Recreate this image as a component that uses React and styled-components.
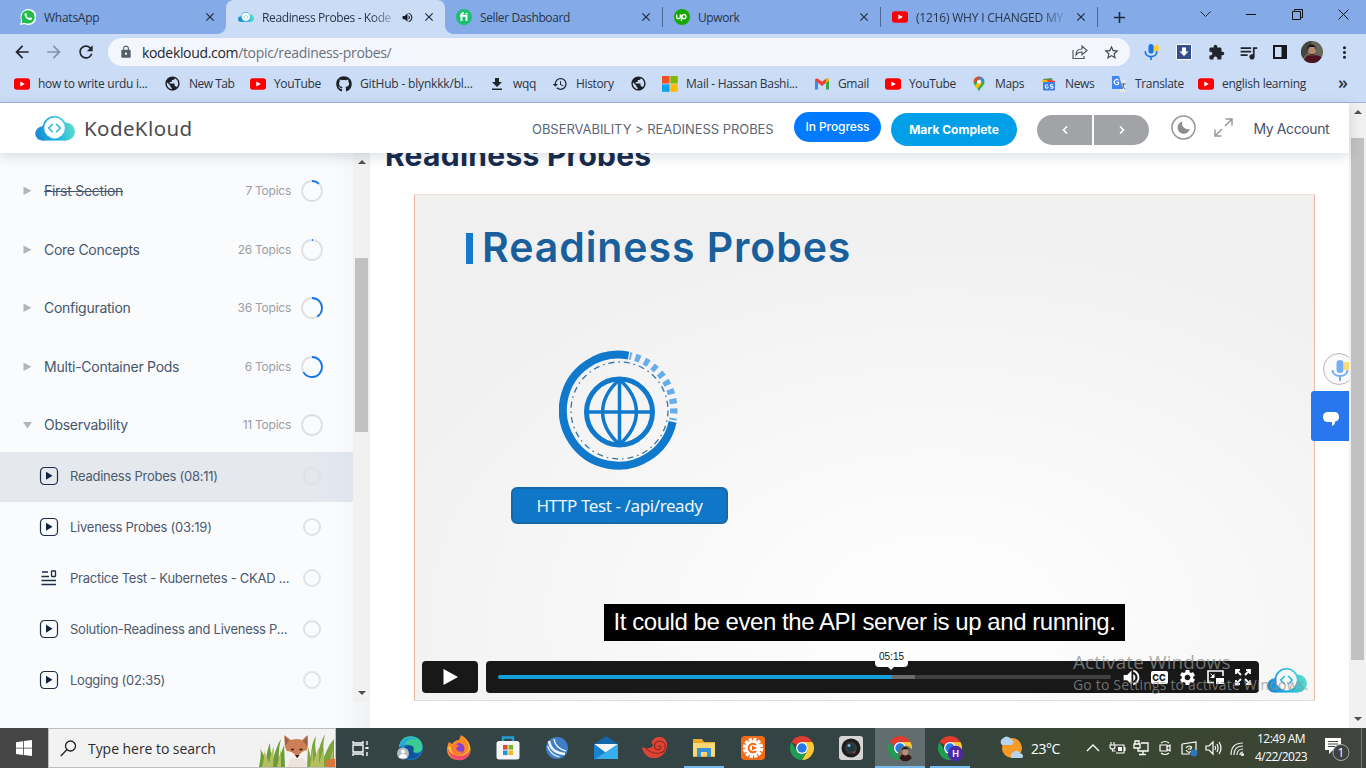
import React from "react";
import styled, { createGlobalStyle } from "styled-components";
import {
  MdArrowBack, MdArrowForward, MdRefresh, MdLock, MdStarBorder, MdExtension, MdQueueMusic,
  MdMoreVert, MdHistory, MdPublic, MdVolumeUp, MdSettings, MdClose, MdAdd,
} from "react-icons/md";
import { FaGithub } from "react-icons/fa";

const Global = createGlobalStyle`
  * { box-sizing: border-box; }
  body { margin: 0; overflow: hidden; background: #fff; }
  svg { display: block; flex: none; }
`;

const chromeFont = `"Open Sans", "Noto Sans", sans-serif`;
const pageFont = `Inter, "Liberation Sans", sans-serif`;

const Screen = styled.div`
  width: 1366px;
  height: 768px;
  display: flex;
  flex-direction: column;
  overflow: hidden;
  position: relative;
  font-family: ${chromeFont};
`;

/* ---------- browser chrome ---------- */
const TabStrip = styled.div`
  height: 34px;
  flex: none;
  display: flex;
  background: #84abe8;
`;
const Tab = styled.div`
  width: ${(p) => p.$w}px;
  height: 34px;
  display: flex;
  align-items: center;
  padding: 0 9px 0 ${(p) => p.$pl ?? 12}px;
  color: #273449;
  font-size: 12px;
  border-radius: 8px 8px 0 0;
  background: ${(p) => (p.$active ? "#cbdcf6" : "transparent")};
  position: relative;
  &::before, &::after {
    content: "";
    display: ${(p) => (p.$active ? "block" : "none")};
    position: absolute;
    bottom: 0;
    width: 8px;
    height: 8px;
  }
  &::before { left: -8px; background: radial-gradient(circle at 0 0, transparent 7.5px, #cbdcf6 8px); }
  &::after { right: -8px; background: radial-gradient(circle at 100% 0, transparent 7.5px, #cbdcf6 8px); }
`;
const TabTitle = styled.span`
  flex: 1;
  margin-left: 8px;
  white-space: nowrap;
  letter-spacing: ${(p) => p.$ls ?? -0.38}px;
  ${(p) => p.$fade && "mask-image: linear-gradient(90deg, #000 82%, rgba(0,0,0,.15) 100%);"}
`;
const TabDivider = styled.i`
  width: 1px;
  height: 20px;
  margin-top: 7px;
  background: #4a6796;
`;
const NewTab = styled.div`
  width: 42px;
  display: flex;
  align-items: center;
  justify-content: center;
`;
const WindowButtons = styled.div`
  margin-left: auto;
  display: flex;
  width: 184px;
  height: 29px;
`;
const WindowButton = styled.div`
  width: 46px;
  display: flex;
  align-items: center;
  justify-content: center;
`;
const Toolbar = styled.div`
  height: 36px;
  flex: none;
  background: #cbdcf6;
  display: flex;
  align-items: center;
  color: #20242b;
`;
const ToolButton = styled.div`
  width: ${(p) => p.$w ?? 32}px;
  display: flex;
  justify-content: center;
  align-items: center;
  color: ${(p) => p.$c ?? "#20242b"};
`;
const AddressBar = styled.div`
  width: 1022px;
  height: 28px;
  border-radius: 14px;
  background: #f3f7fd;
  display: flex;
  align-items: center;
  padding: 0 10px 0 11px;
  margin: 0 5px 0 6px;
  font-size: 14px;
  color: #6a717b;
`;
const Url = styled.span`
  flex: 1;
  margin-left: 9px;
  letter-spacing: -0.33px;
  b { font-weight: 400; color: #22262c; }
`;
const ShareBox = styled.div`margin-right: 15px;`;
const Bookmarks = styled.div`
  height: 33px;
  flex: none;
  background: #cbdcf6;
  border-bottom: 1px solid #9fb4d8;
  padding: 0 0 5px 14px;
  display: flex;
  align-items: center;
  font-size: 12px;
  color: #2b3442;
`;
const Bookmark = styled.div`
  width: ${(p) => p.$w}px;
  display: flex;
  align-items: center;
  white-space: nowrap;
  gap: 8px;
  letter-spacing: ${(p) => p.$ls ?? -0.35}px;
`;
const More = styled.span`
  margin-left: auto;
  margin-right: 18px;
  margin-top: -4px;
  font-size: 18px;
  font-weight: 600;
  line-height: 18px;
`;

/* ---------- page ---------- */
const Page = styled.div`
  height: 625px;
  flex: none;
  display: flex;
  font-family: ${pageFont};
`;
const Site = styled.div`
  width: 1349px;
  display: flex;
  flex-direction: column;
  position: relative;
`;
const SiteHeader = styled.header`
  height: 50px;
  flex: none;
  background: #fff;
  display: flex;
  align-items: center;
  padding-left: 35px;
  position: relative;
  z-index: 2;
  box-shadow: 0 3px 12px rgba(30, 45, 80, 0.17);
`;
const Brand = styled.span`
  width: 448px;
  margin: -1px 0 0 9px;
  font: 400 20.5px "Noto Sans", sans-serif;
  letter-spacing: 0.4px;
  color: #4b4b4d;
`;
const Crumbs = styled.span`
  width: 262px;
  font-size: 13px;
  padding-top: 2px;
  color: #5c6675;
  white-space: nowrap;
  letter-spacing: -0.05px;
`;
const Pill = styled.span`
  width: ${(p) => p.$w}px;
  height: ${(p) => p.$h}px;
  margin: ${(p) => p.$m};
  border-radius: 20px;
  background: ${(p) => p.$bg};
  color: #fff;
  font-size: 12px;
  font-weight: ${(p) => p.$fw};
  letter-spacing: ${(p) => p.$ls}px;
  display: flex;
  align-items: center;
  justify-content: center;
  white-space: nowrap;
  padding-bottom: 1px;
`;
const NavPair = styled.div`
  width: 112px;
  height: 30px;
  margin: 4px 22px 0 20px;
  display: flex;
  gap: 2px;
  border-radius: 15px;
  overflow: hidden;
`;
const NavHalf = styled.div`
  flex: 1;
  background: #a1a3a7;
  display: flex;
  align-items: center;
  justify-content: center;
`;
const HeaderIcon = styled.div`margin: ${(p) => p.$m};`;
const Account = styled.span`
  font-size: 14px;
  color: #43536b;
  white-space: nowrap;
  letter-spacing: -0.4px;
`;
const Body = styled.div`
  height: 575px;
  display: flex;
  overflow: hidden;
`;
const Sidebar = styled.aside`
  width: 370px;
  display: flex;
  background: linear-gradient(90deg, #fafbfd 330px, #f1f3f8 100%);
`;
const Outline = styled.div`
  width: 353px;
  padding-top: 6.5px;
`;
const SectionRow = styled.div`
  height: 58.5px;
  padding: 4.5px 30px 0 23px;
  display: flex;
  align-items: center;
  color: #46566d;
  font-size: 14px;
`;
const SectionName = styled.span`
  flex: 1;
  margin: -1px 0 0 12px;
  letter-spacing: -0.27px;
  text-decoration: ${(p) => (p.$done ? "line-through" : "none")};
`;
const TopicCount = styled.span`
  font-size: 12px;
  color: #9a9da3;
  margin: -1px 10px 0 0;
  letter-spacing: -0.25px;
`;
const LessonRow = styled.div`
  height: 50px;
  margin-bottom: 1px;
  padding: 0 32.5px 2px 39px;
  display: flex;
  align-items: center;
  background: ${(p) => (p.$active ? "linear-gradient(90deg,#e5e9ee 310px,#e0e4ee)" : "transparent")};
  color: #4b5a70;
  font-size: 13px;
`;
const LessonName = styled.span`
  flex: 1;
  margin-left: 11px;
  white-space: nowrap;
  letter-spacing: -0.25px;
`;
const Check = styled.i`
  width: 18px;
  height: 18px;
  margin-top: -1px;
  border-radius: 50%;
  border: 2px solid #dfe1e4;
`;
const Track = styled.div`
  width: 17px;
  height: ${(p) => p.$h}px;
  flex: none;
  background: #f1f1f1;
  display: flex;
  flex-direction: column;
  align-items: center;
  padding: ${(p) => p.$pt}px 0 ${(p) => p.$pb}px;
`;
const Thumb = styled.div`
  width: 13px;
  margin-top: ${(p) => p.$mt}px;
  margin-bottom: auto;
  height: ${(p) => p.$h}px;
  background: #c1c1c1;
`;
const Arrow = styled.i`
  border: 4px solid transparent;
  ${(p) => (p.$down ? "border-top-color:#505050;border-bottom:0;" : "border-bottom-color:#505050;border-top:0;")}
`;
const Main = styled.main`
  flex: 1;
  background: #fff;
  padding-left: 15px;
`;
const Heading = styled.h1`
  margin: -18px 0 0;
  height: 59px;
  font-size: 30px;
  line-height: 40px;
  font-weight: 700;
  color: #172b4d;
  letter-spacing: 0.27px;
`;
const Video = styled.section`
  width: 901px;
  height: 507px;
  margin-left: 29px;
  position: relative;
  border: 1px solid #e9b9a4;
  border-top-color: #eed9d3;
  border-bottom-color: #ddd;
  background: radial-gradient(ellipse 620px 400px at 58% 84%, #fcfcfc 20%, #f6f6f6 62%, #f0f0f1 100%);
  padding: 33px 0 0 51px;
`;
const SlideTitle = styled.div`
  height: 38px;
  display: flex;
  align-items: center;
  gap: 9px;
  font-size: 41px;
  font-weight: 600;
  line-height: 36px;
  color: #195f9c;
  letter-spacing: 0.92px;
  white-space: nowrap;
  &::before { content: ""; width: 7px; height: 31px; margin-top: 3px; background: #1279cb; }
`;
const Probe = styled.div`
  width: 217px;
  margin: 84px 0 0 45px;
  display: flex;
  flex-direction: column;
  align-items: center;
`;
const ProbeLabel = styled.div`
  width: 217px;
  height: 37px;
  margin-top: 15px;
  border: 2px solid #1767ab;
  border-radius: 6px;
  background: #0e77c8;
  color: #eef6fd;
  font: 400 17px/34px "Noto Sans", sans-serif;
  letter-spacing: -0.4px;
  text-align: center;
`;
const Caption = styled.div`
  position: absolute;
  left: 189px;
  top: 409px;
  width: 521px;
  height: 37px;
  background: #000;
  color: #fff;
  text-align: center;
  font: 24px/36px "Liberation Sans", Arial, sans-serif;
  letter-spacing: -0.45px;
  white-space: nowrap;
`;
const Controls = styled.div`
  position: absolute;
  left: 7px;
  bottom: 7px;
  display: flex;
  align-items: center;
  gap: 8px;
`;
const PlayButton = styled.div`
  width: 56px;
  height: 32px;
  border-radius: 4px;
  background: #181818;
  display: flex;
  align-items: center;
  justify-content: center;
`;
const Bar = styled.div`
  width: 773px;
  height: 32px;
  border-radius: 4px;
  background: #181818;
  display: flex;
  align-items: center;
  padding-left: 12px;
`;
const Progress = styled.div`
  width: 613px;
  height: 4px;
  margin-right: 10px;
  border-radius: 2px;
  position: relative;
  background: linear-gradient(90deg, #15a0dc 394px, #6b6b6b 394px, #6b6b6b 417px, #404040 417px);
`;
const TimeTip = styled.div`
  position: absolute;
  left: 377px;
  top: -28px;
  width: 33px;
  height: 20px;
  border-radius: 4px;
  background: #fff;
  color: #111;
  text-align: center;
  font: 10px/19px "Liberation Sans", Arial, sans-serif;
  &::after {
    content: "";
    position: absolute;
    left: 12px;
    top: 19px;
    border: 4px solid transparent;
    border-top-color: #fff;
  }
`;
const BarIcon = styled.div`
  width: 28px;
  margin-left: ${(p) => p.$ml ?? 0}px;
  display: flex;
  justify-content: center;
`;
const CC = styled.b`
  width: 17px;
  height: 13px;
  border-radius: 2px;
  background: #fff;
  color: #181818;
  font: 800 9px/13px Inter, sans-serif;
  text-align: center;
`;
const PlayerLogo = styled.div`margin-top: 6px;`;
const FloatingMic = styled.div`
  position: absolute;
  right: 0;
  top: 250px;
  width: 26px;
  height: 32px;
  overflow: hidden;
`;
const ChatButton = styled.div`
  position: absolute;
  right: 0;
  top: 288px;
  width: 38px;
  height: 50px;
  border-radius: 3px 0 0 3px;
  background: #2977ef;
  display: flex;
  align-items: center;
  justify-content: center;
  padding: 5px 0 0 2px;
`;
const Watermark = styled.div`
  position: absolute;
  left: 1073px;
  top: 650px;
  color: rgba(145, 145, 145, 0.76);
  white-space: nowrap;
`;
const WatermarkTitle = styled.div`
  font-size: 19px;
  line-height: 24px;
  letter-spacing: 0.1px;
`;
const WatermarkText = styled.div`
  font-size: 14px;
  line-height: 22px;
  letter-spacing: 0.17px;
`;

/* ---------- taskbar ---------- */
const Taskbar = styled.footer`
  height: 40px;
  flex: none;
  display: flex;
  background: linear-gradient(90deg, #454545 0, #454545 48px, #344344 336px, #344344 900px, #394733 1080px, #394531 1230px, #414340 1366px);
  color: #fff;
`;
const Start = styled.div`
  width: 48px;
  display: flex;
  align-items: center;
  justify-content: center;
`;
const Search = styled.div`
  width: 288px;
  border: 1px solid #bdbdbd;
  background: #f2f2f2;
  display: flex;
  align-items: center;
  padding-left: 11px;
  color: #2d2d2d;
  font-size: 14px;
  overflow: hidden;
`;
const SearchText = styled.span`
  flex: 1;
  margin-left: 11px;
  letter-spacing: -0.05px;
  white-space: nowrap;
`;
const Task = styled.div`
  width: ${(p) => p.$w ?? 49}px;
  display: flex;
  align-items: center;
  justify-content: center;
  background: ${(p) => (p.$active ? "#616e6f" : "transparent")};
  ${(p) => p.$open && "background-image: linear-gradient(#76b9ed, #76b9ed); background-size: 40px 2px; background-position: center bottom; background-repeat: no-repeat;"}
  ${(p) => p.$active && "background-size: 100% 2px;"}
`;
const Weather = styled.div`
  width: 100px;
  padding-left: 24px;
  display: flex;
  align-items: center;
  gap: 7px;
  font-size: 14px;
  letter-spacing: -0.5px;
`;
const Tray = styled.div`
  margin-left: 7px;
  display: flex;
  align-items: center;
`;
const TrayIcon = styled.div`
  width: 24px;
  display: flex;
  justify-content: center;
`;
const Clock = styled.div`
  width: 60px;
  padding-top: 2px;
  margin-left: 2px;
  font-size: 12px;
  line-height: 18px;
  text-align: center;
  white-space: nowrap;
  letter-spacing: -0.52px;
`;
const Notice = styled.div`
  margin-left: auto;
  width: 41px;
  border-right: 1px solid #777;
  margin-right: 4px;
  display: flex;
  align-items: center;
  padding-left: 3px;
`;

/* ---------- drawings ---------- */
const YouTube = () => (
  <svg width="16" height="16" viewBox="0 0 16 16"><rect y="2.200" width="16" height="11.600" rx="2.800" fill="#f00" /><path d="M6.300 5.400v5.200L10.800 8z" fill="#fff" /></svg>
);
const CloudLogo = ({ size = 40, id, ring = "#fff" }) => (
  <svg width={size} height={size * 0.625} viewBox="0 0 40 25">
    <defs><linearGradient id={id} gradientUnits="userSpaceOnUse" x1="2" x2="38" y1="20" y2="8"><stop stopColor="#178bd6" /><stop offset=".5" stopColor="#25b5df" /><stop offset="1" stopColor="#5cdccb" /></linearGradient></defs>
    <g fill={`url(#${id})`}><circle cx="7.200" cy="17.600" r="7" /><circle cx="31" cy="15.500" r="9" /><path d="M7 10h24v14.600H7z" /><circle cx="19.500" cy="12" r="11.900" /></g>
    <circle cx="19.500" cy="12" r="10.400" fill={ring} />
    <path d="M17.800 8l-4.100 4.100 4.100 4.100M21.200 8l4.100 4.100-4.100 4.100" fill="none" stroke="#28b9dc" strokeWidth="1.500" />
  </svg>
);
const MicMark = ({ w = 16 }) => (
  <svg width={w} height={w} viewBox="0 0 16 16">
    <rect x="9.500" y="1.200" width="6.200" height="6" rx="1" fill="#fbce2b" />
    <rect x="5.500" y="0" width="5" height="9.500" rx="2.500" fill="#1a73e8" />
    <path d="M2.200 7.200c0 3.200 2.500 5.400 5.800 5.400s5.800-2.200 5.800-5.400M8 12.500V16" fill="none" stroke="#1a73e8" strokeWidth="1.700" />
  </svg>
);
const Chrome = ({ badge }) => (
  <svg width="28" height="28" viewBox="0 0 28 28">
    <path d="M14 2A12 12 0 0 1 24.400 8H14a6 6 0 0 0-5.200 3L3.600 8A12 12 0 0 1 14 2z" fill="#e33b2e" />
    <path d="M24.400 8A12 12 0 0 1 14 26l5.200-9A6 6 0 0 0 19.200 11L14 8z" fill="#fcc934" />
    <path d="M3.600 8l5.200 9a6 6 0 0 0 5.200 3h3.500L14 26A12 12 0 0 1 3.600 8z" fill="#1e9c50" />
    <circle cx="14" cy="14" r="6" fill="#fff" /><circle cx="14" cy="14" r="4.700" fill="#2779ea" />
    {badge === "H" && (<><circle cx="19.500" cy="19.500" r="7.700" fill="#4b2ba5" /><text x="19.500" y="22.700" textAnchor="middle" fontSize="9" fontWeight="600" fill="#fff" fontFamily="Inter, sans-serif">H</text></>)}
    {badge === "photo" && (<><circle cx="19.500" cy="19.500" r="7.700" fill="#69705f" /><path d="M13.500 24.500c1-3.600 3-4.500 6-4.500s5.500 1 6.300 4a7.700 7.700 0 0 1-12.300.5z" fill="#34181d" /><ellipse cx="19.300" cy="17.500" rx="3" ry="3.900" fill="#bb8e78" /><path d="M15.900 17c-.5-5 7-5.500 6.800 0l-1-1.800h-4.600z" fill="#17181a" /></>)}
  </svg>
);
const Avatar = () => (
  <svg width="22" height="22" viewBox="0 0 22 22"><circle cx="11" cy="11" r="11" fill="#69665a" /><path d="M11 0a11 11 0 0 0-11 11c0 3 1 5 2 6l5-6z" fill="#45473f" /><path d="M3.200 19C5 14.500 7 14 11.500 14c5 0 8 1 9 2.500A11 11 0 0 1 3.200 19z" fill="#4b1420" /><ellipse cx="11" cy="9.500" rx="3.800" ry="5.200" fill="#b98872" /><path d="M6.500 9C5.500 1.500 15.700 1.500 15 9l-1.500-3H8.300z" fill="#14161a" /><path d="M8 12c1 3.500 5 3.500 6 0l-1.500 1h-3z" fill="#362923" /></svg>
);
const PlayBox = () => (
  <svg width="20" height="20" viewBox="0 0 20 20"><rect x="1.500" y="1.500" width="17" height="17" rx="4" fill="none" stroke="#1d2d48" strokeWidth="1.200" /><path d="M7 5.700v8l6.500-4z" fill="#10233f" /></svg>
);
const QuizIcon = () => (
  <svg width="20" height="20" viewBox="0 0 20 20" fill="none" stroke="#1d2d48" strokeWidth="1.300"><path d="M3 4h6M2.500 8.500h7.500M2.500 12.500h14.500M2.500 16.500h14.500" /><rect x="12.500" y="3" width="4" height="5.500" rx=".5" /></svg>
);
const Ring = ({ value }) => (
  <svg width="22" height="22" viewBox="0 0 22 22"><g fill="none" strokeWidth="1.800"><circle cx="11" cy="11" r="10" stroke="#dedfe2" />{value > 0 && <circle cx="11" cy="11" r="10" stroke="#1478ea" strokeDasharray={`${value * 62.83} 63`} transform="rotate(-90 11 11)" />}</g></svg>
);
const Caret = ({ open }) => (
  <svg width="9" height="10" viewBox="0 0 9 10"><path d={open ? "M0 2h9L4.500 8.500z" : "M.5 .5v8.500L8.500 4.700z"} fill="#b4b5b8" /></svg>
);
const ProbeGlobe = () => (
  <svg width="122" height="122" viewBox="0 0 122 122" fill="none">
    <path d="M69.500 5.600A55.500 55.500 0 1 0 113.600 71.800" stroke="#1179cb" strokeWidth="8" />
    <path d="M70.600 5.800A55.500 55.500 0 0 1 113.800 70.600" stroke="#68adeb" strokeWidth="7.500" strokeDasharray="2 4 5 4.700 5 4.700 5 4.700 5 4.700 5 4.700 5 4.700 5 4.700 5 4.700 2 3" />
    <circle cx="60.500" cy="60.500" r="48.500" stroke="#3477a7" strokeWidth="1.300" strokeDasharray="6 4 1.500 4" />
    <g stroke="#1179cb" transform="translate(0 1.500)"><circle cx="60.500" cy="60.500" r="33" strokeWidth="5" /><path d="M28 60.500h65M60.500 28v65" strokeWidth="3.500" /><path d="M60.500 28C38 48 38 73 60.500 93M60.500 28C83 48 83 73 60.500 93" strokeWidth="3.500" /></g>
  </svg>
);
const Fox = () => (
  <svg width="76" height="38" viewBox="0 0 76 38">
    <path d="M0 38Q3 23 1 19Q5 26 7 32Q8 20 11 14Q11 23 14 30Q18 16 22 10Q19 21 20 30L25 16L26 38Z" fill="#6c9b3a" />
    <path d="M48 38L49 18L52 29Q52 14 57 7Q55 18 58 28Q61 14 66 5Q63 18 65 28Q70 15 75 10V38Z" fill="#7ba53c" />
    <path d="M3 38Q6 26 5 21L10 34Q12 23 15 17L14 38M18 38L22 20V38M51 38L54 20V34L60 18V35L65 17V38M69 38L74 20V38" fill="#b4bf61" />
    <path d="M29 38c0-6 4-11 9-11s10 4 9 11z" fill="#eee4dc" />
    <path d="M25 6l7 5q6-2 11 0l6-5 0 11q-1 9-11 14-9-4-12-13z" fill="#cd8058" />
    <path d="M26 7l4 5-4 5zM48 7l-4 5 4 5z" fill="#9c6149" />
    <path d="M27 22q6 0 9 4l2 3 2-3q3-4 8-5-2 7-10 10-8-3-11-9z" fill="#f8f2ed" />
    <ellipse cx="33.500" cy="20.500" rx="1.700" ry=".9" fill="#322a27" /><ellipse cx="42" cy="20.500" rx="1.700" ry=".9" fill="#322a27" /><path d="M36 26h4.600l-2.300 3z" fill="#251f21" />
    <path d="M67 38v-6q4-3 9-2v8z" fill="#d9763a" />
  </svg>
);
const svgTask = {
  view: <svg width="17" height="17" viewBox="0 0 17 17" fill="none" stroke="#fff" strokeWidth="1.300"><path d="M1 1v2h10V1M1 16v-2h10v2M1 5h10v7H1zM15 1v4M15 12v4" /><path d="M13.500 7h3v2h-3z" fill="#fff" stroke="none" /></svg>,
  edge: <svg width="26" height="26" viewBox="0 0 26 26"><circle cx="14" cy="13" r="12" fill="#1474ba" /><path d="M2 12C3 3 11-1 19 2.500c7 3 8 11 4.500 14-3 2.500-8 1-8-1.500 1-5-8-7-13.500-3z" fill="#3dcb94" /><path d="M2 12C4 2 15 0 20 5c-7-3-12 1-13 7-2-1-4-1-5 0z" fill="#25a9dc" /><path d="M8 12c6-4 11 0 8 5 2 3 6 2 8 0-3 6-10 9-15 5-3-3-3-7-1-10z" fill="#0d559b" /><circle cx="6" cy="18.500" r="6" fill="#b5bbbe" /><circle cx="6" cy="16.500" r="2" fill="#fff" /><path d="M2 23q0-4 4-4t4 4z" fill="#fff" /></svg>,
  fox: <svg width="26" height="26" viewBox="0 0 26 26"><path d="M3 7l3 2q3-4 7-4l2-5q7 4 9 11c3 10-6 15-12 14C3 25-2 17 3 7z" fill="#fd8a25" /><path d="M16 1q6 5 7 12-3 8-10 8c-6 0-9-5-7-10l-4 1q-1 12 11 12c9 0 13-8 10-15-2-4-4-6-7-8z" fill="#fbc72d" /><path d="M2 13q3 9 13 8 7-1 9-7c0 8-6 12-12 11S2 20 2 13z" fill="#f6476f" /><circle cx="13" cy="13.500" r="5.500" fill="#8740ce" /><path d="M5 10q5-2 9 1-3 0-4 3 3 4 7 2-3 5-8 3-5-3-4-9z" fill="#fb7a35" /></svg>,
  store: <svg width="26" height="26" viewBox="0 0 26 26"><path d="M8 7V2.500h10V7" fill="none" stroke="#24a0d8" strokeWidth="2.500" /><rect x="1.500" y="6" width="23" height="18.500" rx="2.500" fill="#f5f6f7" /><path d="M8 10h4.600v4.600H8z" fill="#e04b32" /><path d="M13.500 10h4.600v4.600h-4.600z" fill="#76b62b" /><path d="M8 15.500h4.600v4.600H8z" fill="#199bd7" /><path d="M13.500 15.500h4.600v4.600h-4.600z" fill="#f7b523" /></svg>,
  globe: <svg width="24" height="24" viewBox="0 0 24 24"><circle cx="12" cy="12" r="11" fill="#3f7fc9" /><g fill="none" stroke="#edf5ff"><path d="M4 5q2 12 16 13" strokeWidth="2.500" /><path d="M9 3q1 9 12 12" strokeWidth="1.500" /><path d="M2.500 10q3 9 12 11" strokeWidth="1.200" /></g></svg>,
  mail: <svg width="26" height="26" viewBox="0 0 26 26"><path d="M1 9L13 1l12 8v15H1z" fill="#1266a7" /><path d="M1 9h24L13 18z" fill="#f2f4f5" /><path d="M1 9l12 9-12 7z" fill="#1783ce" /><path d="M25 9v15H2z" fill="#37aeea" /></svg>,
  shell: <svg width="26" height="26" viewBox="0 0 26 26"><path d="M0 12q7 3 11-1c0-3-2-1-1-4C12 0 25 0 25 10c0 9-8 14-14 13-6 0-10-5-11-11z" fill="#dc4436" /><path d="M16 15c-5-1-5-9 2-9 7 1 7 10 0 12-7 1-11-1-14-5M16 12q2-3 3 0-1 4-4 2" fill="none" stroke="#96251f" strokeWidth="1.200" /></svg>,
  folder: <svg width="24" height="24" viewBox="0 0 24 24"><path d="M1 3h9l2 3h11v15H1z" fill="#e9aa2c" /><path d="M1 7h22v13H1z" fill="#fbd873" /><path d="M5 12h14v9h-4v-5H9v5H5z" fill="#3a91d3" /></svg>,
  sun: <svg width="26" height="26" viewBox="0 0 26 26"><rect x="1" y="1" width="24" height="24" rx="4" fill="#f36b17" /><circle cx="13" cy="13" r="8.800" fill="none" stroke="#fff" strokeWidth="2.800" strokeDasharray="3.300 1.300" /><circle cx="13" cy="13" r="7.800" fill="#fff" /><path d="M16 10a4.300 4.300 0 1 0 0 6" fill="none" stroke="#f36b17" strokeWidth="2" /><path d="M12 10.500v5l5-2.500z" fill="#f36b17" /></svg>,
  camera: <svg width="26" height="26" viewBox="0 0 26 26"><rect x="1" y="1" width="24" height="24" rx="3" fill="#d6d5d3" /><circle cx="13" cy="13" r="9.500" fill="#1b1d1f" /><circle cx="13" cy="13" r="6" fill="#34393b" /><circle cx="13" cy="13" r="3.500" fill="#173942" /><circle cx="11" cy="10.500" r="1.500" fill="#77b9c6" /><path d="M15 17l3-1-2 3z" fill="#c94134" /></svg>,
};
const svgTray = [
  <svg width="14" height="10" viewBox="0 0 14 10"><path d="M1 8l6-6 6 6" fill="none" stroke="#fff" strokeWidth="1.300" /></svg>,
  <svg width="17" height="16" viewBox="0 0 17 16" fill="none" stroke="#fff" strokeWidth="1.100"><path d="M6 5h9v8H7M16 7v4M2 2v3M5 2v3M1 5h5v2q0 2-2.500 2T1 7zM3.500 9v2h3" /><path d="M9 7h4v4H9z" fill="#fff" stroke="none" /></svg>,
  <svg width="16" height="16" viewBox="0 0 16 16" fill="none" stroke="#fff" strokeWidth="1.300"><path d="M8 3h7v8H5V8M10 11v3M6 14.500h7" /><path d="M1 4h6v4H1zM2 4V1h4v3" /></svg>,
  <svg width="14" height="16" viewBox="0 0 14 16" fill="none" stroke="#fff" strokeWidth="1.200"><path d="M2 5h7v6H2zM9 7l3-2v6L9 9M3 3q4-3 8 0M3 13q4 3 8 0" /></svg>,
  <svg width="17" height="17" viewBox="0 0 17 17" fill="none" stroke="#fff" strokeWidth="1.200"><path d="M1 4l14-2v10M1 4v10h8M5 8q3-4 6 0M10 6v3H7M5 10q3 4 5 1" /><circle cx="13" cy="13" r="3.500" fill="#2d75bd" stroke="none" /></svg>,
  <svg width="17" height="16" viewBox="0 0 17 16" fill="none" stroke="#fff" strokeWidth="1.200"><path d="M1 6h3l4-4v12l-4-4H1zM10 6q1 2 0 4M12 4q2 4 0 8M14 2q4 6 0 12" /></svg>,
  <svg width="16" height="16" viewBox="0 0 16 16" fill="none" stroke="#e8e8e8" strokeWidth="1.200"><path d="M2 15Q2 3 14 3M5 15Q5 6 14 6M8 15q0-6 6-6M11 15q0-3 3-3" /><circle cx="13.500" cy="14.500" r="1" fill="#fff" /></svg>,
];
const bookmarkIcon = {
  yt: <YouTube />,
  globe: <MdPublic size={17} color="#1c2026" />,
  git: <FaGithub size={16} color="#1c2026" />,
  down: <svg width="16" height="16" viewBox="0 0 16 16"><path d="M6 2h4v4h3l-5 5-5-5h3zM3 12.500h10V14H3z" fill="#20242b" /></svg>,
  hist: <MdHistory size={16} color="#20242b" />,
  ms: <svg width="16" height="16" viewBox="0 0 16 16"><path d="M0 0h7.500v7.500H0z" fill="#f25022" /><path d="M8.300 0h7.500v7.500H8.300z" fill="#7fba00" /><path d="M0 8.300h7.500v7.500H0z" fill="#00a4ef" /><path d="M8.300 8.300h7.500v7.500H8.300z" fill="#ffb900" /></svg>,
  gmail: <svg width="16" height="16" viewBox="0 0 16 16"><path d="M1 4v9.500h3V6z" fill="#4285f4" /><path d="M15 4v9.500h-3V6z" fill="#34a853" /><path d="M1 4.500C1 2 3.500 2 4.500 3L8 5.800 11.500 3C12.500 2 15 2 15 4.500L8 10z" fill="#ea4335" /><path d="M12 3l1-.5q2 0 2 2.200L12 7z" fill="#fbbc04" /></svg>,
  maps: <svg width="16" height="16" viewBox="0 0 16 16"><path d="M2.500 6A5.500 5.500 0 0 1 13.500 6c0 4-4.500 5-5.500 10-1-5-5.500-6-5.500-10z" fill="#34a853" /><path d="M2.800 4.500A5.500 5.500 0 0 1 9.700.8L4 7.500z" fill="#ea4335" /><path d="M9.700.8q3 .9 3.700 3.700L8 9z" fill="#4285f4" /><path d="M4 9.500L9.500 3.500l1 4.500-4.200 5z" fill="#fbbc04" /><circle cx="8" cy="5.800" r="2" fill="#fff" /></svg>,
  news: <svg width="16" height="16" viewBox="0 0 16 16"><path d="M2 3l9-1 1 5H3z" fill="#34a853" /><path d="M5 3l9 2-1 4H5z" fill="#ea4335" /><path d="M1 4h5l1 3H2z" fill="#fbbc04" /><rect x="2" y="6" width="12" height="8.500" rx="1" fill="#3f7fe8" /><path d="M7 9H4.500v3H7v-1.500M12 8.800H9.500v1.600H12v1.800H9.500" stroke="#fff" fill="none" /></svg>,
  trans: <svg width="16" height="16" viewBox="0 0 16 16"><path d="M6 4h9v12H9z" fill="#e6e8ea" /><path d="M1 0h7l4 13H1z" fill="#4285f4" /><path d="M7.500 4.300a2.500 2.500 0 1 0 0 3.600V6.300H5.500" stroke="#fff" fill="none" strokeWidth="1.100" /><path d="M10.500 8H15M12.500 7v1q1 3-2 5M11.500 9.500q1 2.500 3 3.500" stroke="#647180" fill="none" /></svg>,
};
const bookmarks = [
  ["yt", "how to write urdu i...", 150, -0.28], ["globe", "New Tab", 86, -0.5], ["yt", "YouTube", 86], ["git", "GitHub - blynkkk/bl...", 153, -0.18],
  ["down", "wqq", 63], ["hist", "History", 78], ["globe", "", 32], ["ms", "Mail - Hassan Bashi...", 152, -0.28], ["gmail", "Gmail", 71],
  ["yt", "YouTube", 86], ["maps", "Maps", 70], ["news", "News", 70], ["trans", "Translate", 87], ["yt", "english learning", 120, -0.28],
];
const sections = [
  ["First Section", 7, 0.12, true], ["Core Concepts", 26, 0.015], ["Configuration", 36, 0.41], ["Multi-Container Pods", 6, 0.66], ["Observability", 11, 0],
];
const lessons = [
  ["Readiness Probes (08:11)"], ["Liveness Probes (03:19)"], ["Practice Test - Kubernetes - CKAD ...", true],
  ["Solution-Readiness and Liveness P..."], ["Logging (02:35)"],
];
const CloseX = () => <MdClose size={14} color="#202a3a" />;

function Browser() {
  return (
    <>
      <TabStrip>
        <Tab $w={226} $pl={20}>
          <svg width="16" height="16" viewBox="0 0 16 16"><path d="M0 16l1.300-4.500A8 8 0 1 1 4.500 14.900z" fill="#fff" /><circle cx="8" cy="7.900" r="6.700" fill="#1fbd48" /><path d="M1.600 14.500l1-3.500 2.400 2.500z" fill="#1fbd48" /><path d="M5 4.300q1-.9 1.600.2l.5 1.200-.7 1q1 1.800 2.800 2.600l1-1 1.700.8q.3.600-.3 1.300-1.500 1.500-4.500-.6C4.500 7.800 4 5.800 5 4.300z" fill="#fff" /></svg>
          <TabTitle $ls={-0.25}>WhatsApp</TabTitle><CloseX />
        </Tab>
        <Tab $w={219} $active>
          <CloudLogo size={16} id="tabcloud" /><TabTitle $fade>Readiness Probes - Kode</TabTitle>
          <HeaderIcon $m="0 8px 0 6px"><MdVolumeUp size={13} color="#15191f" /></HeaderIcon><CloseX />
        </Tab>
        <Tab $w={217} $pl={11}>
          <svg width="16" height="16" viewBox="0 0 16 16"><circle cx="8" cy="8" r="8" fill="#1dbf73" /><path d="M5.500 12V6q0-2 2.500-2M4 6.700h6.500V12M10.500 4v1.200" stroke="#fff" strokeWidth="1.900" fill="none" /></svg>
          <TabTitle>Seller Dashboard</TabTitle><CloseX />
        </Tab>
        <TabDivider />
        <Tab $w={217} $pl={11}>
          <svg width="16" height="16" viewBox="0 0 16 16"><circle cx="8" cy="8" r="8" fill="#14a800" /><path d="M2.700 5.500v2.200q0 2 1.800 2t1.800-2V5.500q1.500 4 3.700 4.200a2 2 0 1 0-2-2.200L7.300 12" stroke="#fff" strokeWidth="1.300" fill="none" /></svg>
          <TabTitle>Upwork</TabTitle><CloseX />
        </Tab>
        <TabDivider />
        <Tab $w={216} $pl={11}><YouTube /><TabTitle $fade $ls={-0.2}>(1216) WHY I CHANGED MY</TabTitle><HeaderIcon $m="0 0 0 8px"><CloseX /></HeaderIcon></Tab>
        <TabDivider />
        <NewTab><MdAdd size={19} color="#202a3a" /></NewTab>
        <WindowButtons>
          <WindowButton><svg width="11" height="7" viewBox="0 0 11 7"><path d="M.5 .5l5 5 5-5" fill="none" stroke="#1c2635" /></svg></WindowButton>
          <WindowButton><svg width="10" height="2"><path d="M0 .5h10" stroke="#111" /></svg></WindowButton>
          <WindowButton><svg width="11" height="11" viewBox="0 0 11 11" fill="none" stroke="#111"><path d="M.5 2.500h8v8h-8zM2.500 2.500v-2h8v8h-2" /></svg></WindowButton>
          <WindowButton><svg width="11" height="11" viewBox="0 0 11 11"><path d="M.5 .5l10 10M10.500 .5l-10 10" stroke="#111" /></svg></WindowButton>
        </WindowButtons>
      </TabStrip>
      <Toolbar>
        <ToolButton $w={43}><MdArrowBack size={20} /></ToolButton>
        <ToolButton $w={22} $c="#8291ab"><MdArrowForward size={20} /></ToolButton>
        <ToolButton $w={37}><HeaderIcon $m="0 0 0 5px"><MdRefresh size={20} /></HeaderIcon></ToolButton>
        <AddressBar>
          <MdLock size={14} color="#555d68" />
          <Url><b>kodekloud.com</b>/topic/readiness-probes/</Url>
          <ShareBox><svg width="16" height="16" viewBox="0 0 16 16" fill="none" stroke="#4f5865" strokeWidth="1.200"><path d="M1 6v8.500h11V12M4 11q0-6 6-6V2l5 4.500-5 4.200V8Q6 8 4 11z" /></svg></ShareBox>
          <MdStarBorder size={17} color="#40474f" />
        </AddressBar>
        <ToolButton><MicMark /></ToolButton>
        <ToolButton $w={34}><svg width="16" height="16" viewBox="0 0 16 16"><path d="M.5 .5h15v15H.5z" fill="#344f8b" stroke="#fff" /><path d="M6 3.500h4v4h2.500l-4.500 4.500-4.500-4.500H6z" fill="#fff" /></svg></ToolButton>
        <ToolButton $w={31}><MdExtension size={17} /></ToolButton>
        <ToolButton><MdQueueMusic size={21} /></ToolButton>
        <ToolButton><svg width="14" height="14" viewBox="0 0 14 14"><path d="M1 1h12v12H1z" fill="none" stroke="#15191f" strokeWidth="2" /><path d="M8.500 1H13v12H8.500z" fill="#15191f" /></svg></ToolButton>
        <ToolButton><Avatar /></ToolButton>
        <ToolButton $w={33}><MdMoreVert size={19} /></ToolButton>
      </Toolbar>
      <Bookmarks>
        {bookmarks.map(([icon, text, w, ls], i) => <Bookmark key={i} $w={w} $ls={ls}>{bookmarkIcon[icon]}<span>{text}</span></Bookmark>)}
        <More>»</More>
      </Bookmarks>
    </>
  );
}

function Header() {
  return (
    <SiteHeader>
      <CloudLogo id="brandcloud" />
      <Brand>KodeKloud</Brand>
      <Crumbs>OBSERVABILITY &gt; READINESS PROBES</Crumbs>
      <Pill $w={87} $h={30} $m="-2px 10px 0 0" $bg="#007bff" $fw={500} $ls={-0.08}>In Progress</Pill>
      <Pill $w={126} $h={33} $m="3px 0 0 0" $bg="#009fe8" $fw={700} $ls={0}>Mark Complete</Pill>
      <NavPair>
        <NavHalf><svg width="6" height="8" viewBox="0 0 6 8"><path d="M5 .5L1.500 4 5 7.500" fill="none" stroke="#fff" strokeWidth="1.600" /></svg></NavHalf>
        <NavHalf><svg width="6" height="8" viewBox="0 0 6 8"><path d="M1 .5L4.500 4 1 7.500" fill="none" stroke="#fff" strokeWidth="1.600" /></svg></NavHalf>
      </NavPair>
      <HeaderIcon $m="-2px 18px 0 0"><svg width="25" height="25" viewBox="0 0 25 25"><circle cx="12.500" cy="12.500" r="11.500" fill="none" stroke="#939598" strokeWidth="1.500" /><path d="M11.500 6.500a6.200 6.200 0 1 0 7.300 7.300 5.700 5.700 0 0 1-7.300-7.300z" fill="#8b8d91" /></svg></HeaderIcon>
      <HeaderIcon $m="-1px 21px 0 -0.5px"><svg width="19" height="19" viewBox="0 0 19 19" fill="none" stroke="#97999c" strokeWidth="1.500"><path d="M11.500 1H18v6.500M18 1l-7 7M7.500 18H1v-6.500M1 18l7-7" /></svg></HeaderIcon>
      <Account>My Account</Account>
    </SiteHeader>
  );
}

function CourseOutline() {
  return (
    <Sidebar>
      <Outline>
        {sections.map(([name, count, value, done]) => (
          <SectionRow key={name}><Caret open={name === "Observability"} /><SectionName $done={done}>{name}</SectionName><TopicCount>{count} Topics</TopicCount><Ring value={value} /></SectionRow>
        ))}
        {lessons.map(([name, quiz], i) => (
          <LessonRow key={name} $active={i === 0}>{quiz ? <QuizIcon /> : <PlayBox />}<LessonName>{name}</LessonName><Check /></LessonRow>
        ))}
      </Outline>
      <Track $h={549} $pt={7} $pb={7}><Arrow /><Thumb $mt={94} $h={174} /><Arrow $down /></Track>
    </Sidebar>
  );
}

function Player() {
  return (
    <Video>
      <SlideTitle>Readiness Probes</SlideTitle>
      <Probe><ProbeGlobe /><ProbeLabel>HTTP Test - /api/ready</ProbeLabel></Probe>
      <Caption>It could be even the API server is up and running.</Caption>
      <Controls>
        <PlayButton><svg width="15" height="16" viewBox="0 0 15 16"><path d="M.5 0v16L15 8z" fill="#fff" /></svg></PlayButton>
        <Bar>
          <Progress><TimeTip>05:15</TimeTip></Progress>
          <BarIcon $ml={-4}><MdVolumeUp size={21} color="#fff" /></BarIcon>
          <BarIcon><CC>CC</CC></BarIcon>
          <BarIcon><MdSettings size={19} color="#fff" /></BarIcon>
          <BarIcon><svg width="17" height="14" viewBox="0 0 17 14"><path d="M7 12.500H1V1h15v5" fill="none" stroke="#fff" strokeWidth="1.600" /><path d="M9 8h8v6H9zM7.500 3.500V8H3z" fill="#fff" /><path d="M3.500 3.500l3 3" stroke="#fff" /></svg></BarIcon>
          <BarIcon><svg width="16" height="16" viewBox="0 0 16 16" fill="none" stroke="#fff" strokeWidth="1.800"><path d="M1 5V1h4M11 1h4v4M15 11v4h-4M5 15H1v-4M1 1l5 5M15 1l-5 5M15 15l-5-5M1 15l5-5" /></svg></BarIcon>
        </Bar>
        <PlayerLogo><CloudLogo id="playercloud" ring="#f7f7f7" /></PlayerLogo>
      </Controls>
    </Video>
  );
}

function DesktopBar() {
  return (
    <Taskbar>
      <Start><svg width="16" height="16" viewBox="0 0 16 16"><path d="M0 2.200L7 1.200v6.500H0zM7.800 1.100L16 0v7.700H7.800zM0 8.400h7v6.500l-7-1zM7.800 8.400H16V16l-8.200-1.100z" fill="#fff" /></svg></Start>
      <Search>
        <svg width="17" height="17" viewBox="0 0 17 17" fill="none" stroke="#222" strokeWidth="1.300"><circle cx="10.500" cy="6" r="5" /><path d="M7 9.500L.8 16" /></svg>
        <SearchText>Type here to search</SearchText><Fox />
      </Search>
      <Task $w={49}>{svgTask.view}</Task>
      <Task>{svgTask.edge}</Task><Task>{svgTask.fox}</Task><Task>{svgTask.store}</Task><Task>{svgTask.globe}</Task><Task>{svgTask.mail}</Task>
      <Task>{svgTask.shell}</Task><Task $open>{svgTask.folder}</Task><Task>{svgTask.sun}</Task><Task><Chrome /></Task><Task>{svgTask.camera}</Task>
      <Task $w={50} $active $open><Chrome badge="photo" /></Task><Task $open><Chrome badge="H" /></Task>
      <Weather>
        <svg width="26" height="24" viewBox="0 0 26 24"><circle cx="14" cy="12" r="10" fill="#f89b25" /><path d="M4 9a4 4 0 0 1 0-6q5-5 9 0 4 2 1 6zM14 22q-3-2 0-5 5-5 8 0 5 2 2 5z" fill="#b9d2ef" /></svg>
        <span>23°C</span>
      </Weather>
      <Tray>{svgTray.map((icon, i) => <TrayIcon key={i}>{icon}</TrayIcon>)}</Tray>
      <Clock>12:49 AM<br />4/22/2023</Clock>
      <Notice><svg width="28" height="28" viewBox="0 0 28 28"><path d="M1 4h16v12H9l-4 4v-4H1z" fill="#fff" /><path d="M4 7.500h10M4 10h10M4 12.500h7" stroke="#444" strokeWidth="1.100" /><circle cx="17" cy="18.500" r="8" fill="#3f4140" stroke="#aaa" /><text x="17" y="23" textAnchor="middle" fontSize="12" fill="#fff" fontFamily="Open Sans, sans-serif">1</text></svg></Notice>
    </Taskbar>
  );
}

export default function App() {
  return (
    <Screen>
      <Global />
      <Browser />
      <Page>
        <Site>
          <Header />
          <Body>
            <CourseOutline />
            <Main><Heading>Readiness Probes</Heading><Player /></Main>
          </Body>
          <FloatingMic><svg width="32" height="32" viewBox="0 0 32 32"><circle cx="16" cy="16" r="15.500" fill="#fafafa" stroke="#b8b8b8" /><path d="M21 9h9v8h-9z" fill="#fbdc79" /><rect x="13.500" y="7" width="7" height="13" rx="3.500" fill="#75aef7" /><path d="M9.500 17c0 8 15 8 15 0M17 23v5" fill="none" stroke="#75aef7" strokeWidth="2" /></svg></FloatingMic>
          <ChatButton><svg width="16" height="14" viewBox="0 0 16 14"><path d="M5 0h6q5 0 5 5 0 4-4 4.500 0 3-3 4.500V10H5Q0 10 0 5t5-5z" fill="#fff" /></svg></ChatButton>
        </Site>
        <Track $h={625} $pt={7} $pb={7}><Arrow /><Thumb $mt={24} $h={522} /><Arrow $down /></Track>
      </Page>
      <DesktopBar />
      <Watermark><WatermarkTitle>Activate Windows</WatermarkTitle><WatermarkText>Go to Settings to activate Windows.</WatermarkText></Watermark>
    </Screen>
  );
}
